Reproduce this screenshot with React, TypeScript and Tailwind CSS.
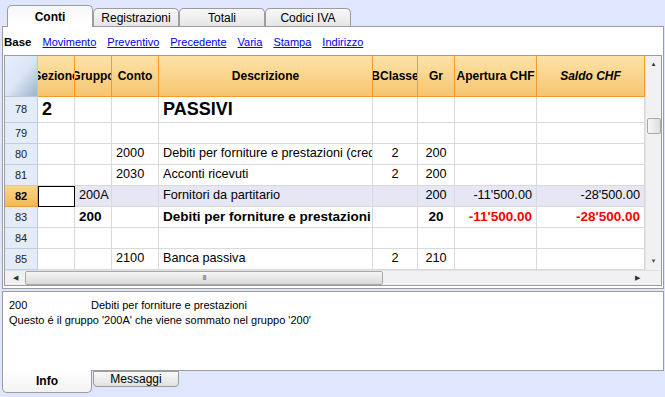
import React from 'react'

const cols = 'grid grid-cols-[33px_37px_37px_47px_214px_45px_37px_82px_108px]'

interface Row {
    n: string
    sez?: string
    grp?: string
    conto?: string
    desc?: string
    bcl?: string
    gr?: string
    ap?: string
    saldo?: string
    big?: boolean
    bold?: boolean
    red?: boolean
    current?: boolean
}

const rows: Row[] = [
    { n: '78', sez: '2', desc: 'PASSIVI', big: true },
    { n: '79' },
    { n: '80', conto: '2000', desc: 'Debiti per forniture e prestazioni (creditori)', bcl: '2', gr: '200' },
    { n: '81', conto: '2030', desc: 'Acconti ricevuti', bcl: '2', gr: '200' },
    { n: '82', grp: '200A', desc: 'Fornitori da partitario', gr: '200', ap: '-11\'500.00', saldo: '-28\'500.00', current: true },
    { n: '83', grp: '200', desc: 'Debiti per forniture e prestazioni', gr: '20', ap: '-11\'500.00', saldo: '-28\'500.00', bold: true, red: true },
    { n: '84' },
    { n: '85', conto: '2100', desc: 'Banca passiva', bcl: '2', gr: '210' },
]

const headers = [
    { label: 'Sezione' },
    { label: 'Gruppo' },
    { label: 'Conto' },
    { label: 'Descrizione' },
    { label: 'BClasse' },
    { label: 'Gr' },
    { label: 'Apertura CHF' },
    { label: 'Saldo CHF', italic: true },
]

const TopTab = ({ label, active }: { label: string, active?: boolean }) => (
    <div className={`w-[86px] flex items-center justify-center border border-b-0 border-[#9c9c9c] rounded-t-[5px] text-[12px] text-black
        ${active
            ? 'h-[22px] bg-gradient-to-b from-[#f7f7f7] to-white font-bold -mb-px relative z-10 border-b border-b-white'
            : 'h-[18px] bg-gradient-to-b from-[#f8f8f8] to-[#e6e6e6]'}`}>
        {label}
    </div>
)

const Cell = ({ children, className = '' }: { children?: React.ReactNode, className?: string }) => (
    <div className={`border-r border-b border-[#d9d9d9] overflow-hidden whitespace-nowrap flex items-center px-[4px] ${className}`}>
        {children}
    </div>
)

const GridRow = ({ r }: { r: Row }) => {
    const h = r.big ? 'h-[26px]' : 'h-[21px]'
    const bg = r.current ? 'bg-[#e6e6f5]' : 'bg-white'
    const txt = r.bold ? 'font-bold text-[13.5px]' : ''
    return (
        <div className={`${cols} ${h} text-[12.7px] text-black`}>
            <div className={`flex items-center justify-center border-b border-r text-[11px]
                ${r.current
                    ? 'bg-gradient-to-b from-[#fbd48a] to-[#f6b94f] border-[#e6a33a] font-bold'
                    : 'bg-[#e4ecf7] border-[#bccde4] text-[#222]'}`}>
                {r.n}
            </div>
            <Cell className={`${bg} ${r.current ? 'outline outline-1 -outline-offset-1 outline-black bg-white' : ''} ${r.big ? 'text-[18px] font-bold' : ''}`}>{r.sez}</Cell>
            <Cell className={`${bg} ${txt}`}>{r.grp}</Cell>
            <Cell className={`${bg}`}>{r.conto}</Cell>
            <Cell className={`${bg} ${txt} ${r.big ? 'text-[18px] font-bold' : ''}`}>{r.desc}</Cell>
            <Cell className={`${bg} justify-center`}>{r.bcl}</Cell>
            <Cell className={`${bg} ${txt} justify-center`}>{r.gr}</Cell>
            <Cell className={`${bg} ${txt} justify-end ${r.red ? 'text-[#ff0000]' : ''}`}>{r.ap}</Cell>
            <Cell className={`${bg} ${txt} justify-end ${r.red ? 'text-[#ff0000]' : ''}`}>{r.saldo}</Cell>
        </div>
    )
}

export default function App() {
    return (
        <div className="w-[665px] h-[397px] bg-[#dfe6fd] flex flex-col font-['Liberation_Sans',Arial,sans-serif] overflow-hidden">
            {/* top tabs */}
            <div className="flex items-end h-[26px] pl-[7px]">
                <TopTab label="Conti" active />
                <TopTab label="Registrazioni" />
                <TopTab label="Totali" />
                <TopTab label="Codici IVA" />
            </div>

            {/* main panel */}
            <div className="ml-[2px] mr-[1px] h-[263px] bg-white border border-[#9c9c9c] flex flex-col">
                <div className="h-[28px] flex items-center gap-[11px] pl-[1px] pt-[3px] text-[11px]">
                    <span className="font-bold text-[11.5px] text-black">Base</span>
                    {['Movimento', 'Preventivo', 'Precedente', 'Varia', 'Stampa', 'Indirizzo'].map(l => (
                        <span key={l} className="text-[#0000ee] underline">{l}</span>
                    ))}
                </div>

                <div className="mx-[1px] h-[231px] border border-[#9c9c9c] flex flex-col">
                    <div className="flex flex-1">
                        <div className="flex flex-col w-[640px]">
                            {/* header */}
                            <div className={`${cols} h-[41px] text-[12px] font-bold text-black`}>
                                <div className="bg-gradient-to-br from-[#e8eefb] via-[#dce6f7] to-[#9fb3cc] border-r border-b border-[#b9c7dc]" />
                                {headers.map(h => (
                                    <div key={h.label} className={`bg-gradient-to-b from-[#fde3a8] to-[#f6c56f] border-r border-b border-[#f39a2e] flex items-center justify-center overflow-hidden whitespace-nowrap ${h.italic ? 'italic' : ''}`}>
                                        {h.label}
                                    </div>
                                ))}
                            </div>
                            {rows.map(r => <GridRow key={r.n} r={r} />)}
                        </div>
                        {/* vertical scrollbar */}
                        <div className="w-[16px] bg-[#f1f1f3] border-l border-[#e2e2e2] flex flex-col items-center">
                            <div className="h-[17px] flex items-center justify-center text-[6px] text-[#333]">▲</div>
                            <div className="mt-[45px] w-[14px] h-[16px] rounded-[2px] border border-[#a8a8a8] bg-gradient-to-r from-[#f7f7f7] to-[#dedede]" />
                            <div className="flex-1" />
                            <div className="h-[17px] flex items-center justify-center text-[6px] text-[#555]">▼</div>
                        </div>
                    </div>
                    {/* horizontal scrollbar */}
                    <div className="h-[17px] flex bg-[#f1f1f3] border-t border-[#e2e2e2]">
                        <div className="w-[640px] flex items-center">
                            <div className="w-[20px] flex justify-center text-[7px] text-[#333]">◀</div>
                            <div className="w-[358px] h-[14px] rounded-[2px] border border-[#a8a8a8] bg-gradient-to-b from-[#f7f7f7] to-[#d9d9d9] flex items-center justify-center text-[8px] text-[#777] tracking-[-1px]">III</div>
                            <div className="flex-1" />
                            <div className="w-[16px] flex justify-center text-[7px] text-[#333]">▶</div>
                        </div>
                        <div className="flex-1" />
                    </div>
                </div>
            </div>

            {/* info box */}
            <div className="mt-[2px] ml-[2px] mr-[1px] h-[80px] bg-white border border-[#9c9c9c] px-[6px] pt-[6px] text-[11px] text-black leading-[15px] relative z-0">
                <div className="flex">
                    <span className="w-[82px]">200</span>
                    <span>Debiti per forniture e prestazioni</span>
                </div>
                <div>Questo é il gruppo '200A' che viene sommato nel gruppo '200'</div>
            </div>

            {/* bottom tabs */}
            <div className="flex items-start pl-[2px] gap-[1px] -mt-px">
                <div className="w-[90px] h-[23px] bg-gradient-to-b from-white to-[#f3f3f3] border border-t-0 border-[#9c9c9c] rounded-b-[5px] flex items-center justify-center text-[12px] font-bold relative z-10">
                    Info
                </div>
                <div className="w-[86px] h-[16px] mt-px bg-gradient-to-b from-[#f8f8f8] to-[#e2e2e2] border border-[#9c9c9c] rounded-b-[4px] flex items-center justify-center text-[12px]">
                    Messaggi
                </div>
            </div>
        </div>
    )
}
